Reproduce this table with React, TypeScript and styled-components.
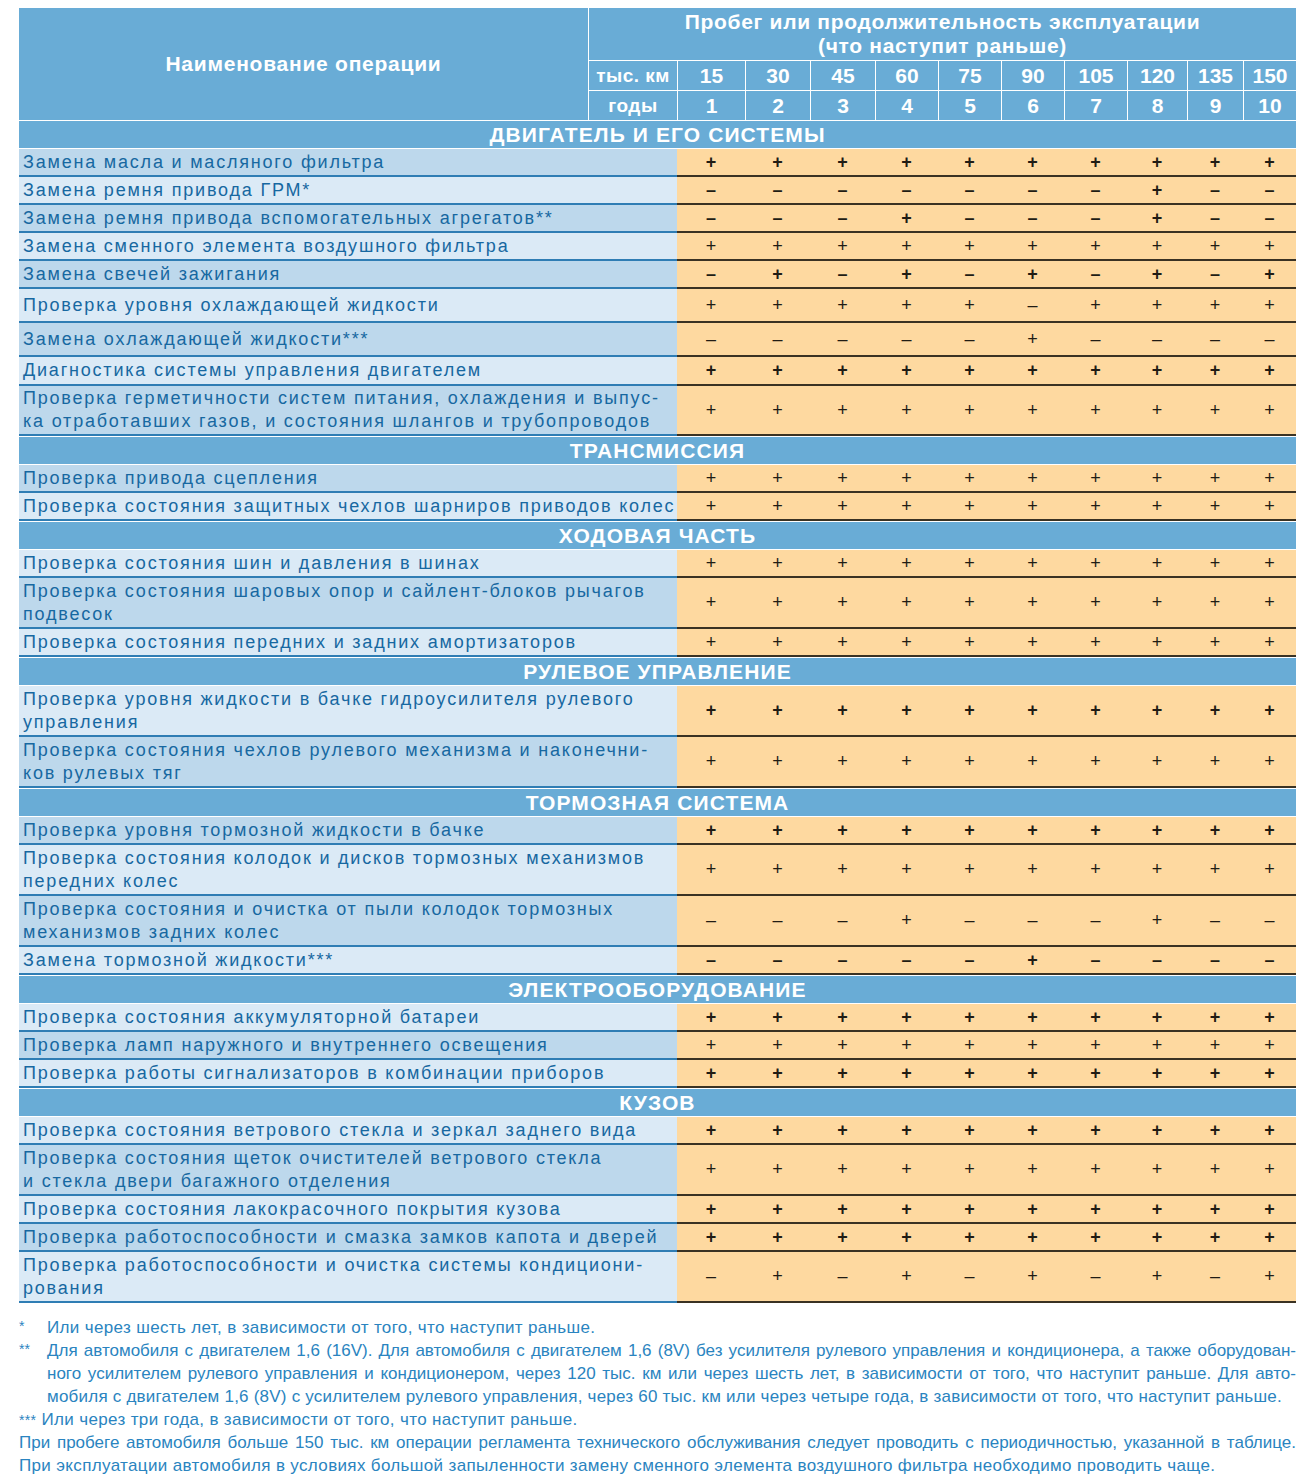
import React from 'react';
import styled, { createGlobalStyle } from 'styled-components';

const GlobalStyle = createGlobalStyle`
  html, body {
    margin: 0;
    padding: 0;
    background: #ffffff;
  }
  body {
    font-family: "Liberation Sans", Arial, sans-serif;
  }
`;

const BLUE = '#69acd6';
const NAME_WIDTH = 658;
const LABEL_WIDTH = 88;
const VALUE_COLS = [68, 65, 65, 63, 63, 63, 63, 60, 56, 53];

const Page = styled.div`
  width: 1277px;
  padding: 8px 10px 0 19px;
`;

const HeadGrid = styled.div`
  display: grid;
  grid-template-columns: ${NAME_WIDTH - LABEL_WIDTH - 1}px ${LABEL_WIDTH}px ${VALUE_COLS.map(w => `${w - 1}px`).join(' ')};
  grid-template-rows: 52px 29px 29px;
  gap: 1px;
  background: #ffffff;
`;

const HeadCell = styled.div<{ $size?: number }>`
  background: ${BLUE};
  color: #ffffff;
  font-weight: 700;
  font-size: ${p => p.$size ?? 20}px;
  display: flex;
  align-items: center;
  justify-content: center;
  white-space: nowrap;
`;

const UnitHead = styled(HeadCell)`
  letter-spacing: 0.5px;
`;

const NameHead = styled(HeadCell)`
  grid-row: 1 / 4;
  letter-spacing: 0.75px;
`;

const TitleHead = styled(HeadCell)`
  grid-column: 2 / -1;
  flex-direction: column;
  line-height: 24px;
  letter-spacing: 0.7px;
`;

const SectionBar = styled.div`
  height: 27px;
  margin: 1px 0;
  background: ${BLUE};
  color: #ffffff;
  font-weight: 700;
  font-size: 21px;
  letter-spacing: 1.1px;
  display: flex;
  align-items: center;
  justify-content: center;
`;

const Row = styled.div<{ $h: number }>`
  display: grid;
  grid-template-columns: ${NAME_WIDTH}px ${VALUE_COLS.map(w => `${w}px`).join(' ')};
  height: ${p => p.$h}px;
`;

const NameCell = styled.div<{ $shade: 'mid' | 'light' }>`
  background: ${p => (p.$shade === 'mid' ? '#bdd8ec' : '#dbeaf6')};
  border-bottom: 2px solid #2f7db4;
  padding: 0 4px;
  display: flex;
  flex-direction: column;
  justify-content: center;
  color: #1768a1;
  font-size: 18px;
  line-height: 23px;
  letter-spacing: 1.8px;
  white-space: nowrap;
  overflow: hidden;
`;

const MarkCell = styled.div<{ $strong?: boolean }>`
  background: #fed9a0;
  border-bottom: 2px solid #3a3223;
  display: flex;
  align-items: center;
  justify-content: center;
  color: #211c14;
  font-size: 18px;
  font-weight: ${p => (p.$strong ? 700 : 400)};
`;

const Notes = styled.div`
  margin-top: 13px;
  color: #2a84c0;
  font-size: 17px;
  line-height: 23px;
`;

const Note = styled.div`
  display: grid;
  grid-template-columns: 28px 1fr;
`;

const Marker = styled.span`
  font-size: 14px;
  line-height: 20px;
`;

const NoteLine = styled.div<{ $fill?: boolean; $tight?: boolean }>`
  letter-spacing: ${p => (p.$fill ? 0 : p.$tight ? 0.22 : 0.35)}px;
  white-space: ${p => (p.$tight ? 'nowrap' : 'normal')};
  text-align: ${p => (p.$fill ? 'justify' : 'left')};
  text-align-last: ${p => (p.$fill ? 'justify' : 'left')};
`;

type Shade = 'mid' | 'light';

interface Op {
  lines: string[];
  marks: string;
  h?: number;
  strong?: boolean;
}

interface Section {
  title: string;
  start: Shade;
  ops: Op[];
}

const ALL = '++++++++++';

const sections: Section[] = [
  {
    title: 'ДВИГАТЕЛЬ И ЕГО СИСТЕМЫ',
    start: 'mid',
    ops: [
      { lines: ['Замена масла и масляного фильтра'], marks: ALL, strong: true },
      { lines: ['Замена ремня привода ГРМ*'], marks: '-------+--', strong: true },
      { lines: ['Замена ремня привода вспомогательных агрегатов**'], marks: '---+---+--', strong: true },
      { lines: ['Замена сменного элемента воздушного фильтра'], marks: ALL },
      { lines: ['Замена свечей зажигания'], marks: '-+-+-+-+-+', strong: true },
      { lines: ['Проверка уровня охлаждающей жидкости'], marks: '+++++-++++', h: 34 },
      { lines: ['Замена охлаждающей жидкости***'], marks: '-----+----', h: 34 },
      { lines: ['Диагностика системы управления двигателем'], marks: ALL, h: 29, strong: true },
      {
        lines: [
          'Проверка герметичности систем питания, охлаждения и выпус-',
          'ка отработавших газов, и состояния шлангов и трубопроводов',
        ],
        marks: ALL,
        h: 50,
      },
    ],
  },
  {
    title: 'ТРАНСМИССИЯ',
    start: 'mid',
    ops: [
      { lines: ['Проверка привода сцепления'], marks: ALL },
      { lines: ['Проверка состояния защитных чехлов шарниров приводов колес'], marks: ALL },
    ],
  },
  {
    title: 'ХОДОВАЯ ЧАСТЬ',
    start: 'light',
    ops: [
      { lines: ['Проверка состояния шин и давления в шинах'], marks: ALL },
      { lines: ['Проверка состояния шаровых опор и сайлент-блоков рычагов', 'подвесок'], marks: ALL, h: 51 },
      { lines: ['Проверка состояния передних и задних амортизаторов'], marks: ALL },
    ],
  },
  {
    title: 'РУЛЕВОЕ УПРАВЛЕНИЕ',
    start: 'light',
    ops: [
      { lines: ['Проверка уровня жидкости в бачке гидроусилителя рулевого', 'управления'], marks: ALL, h: 51, strong: true },
      { lines: ['Проверка состояния чехлов рулевого механизма и наконечни-', 'ков рулевых тяг'], marks: ALL, h: 51 },
    ],
  },
  {
    title: 'ТОРМОЗНАЯ СИСТЕМА',
    start: 'mid',
    ops: [
      { lines: ['Проверка уровня тормозной жидкости в бачке'], marks: ALL, strong: true },
      { lines: ['Проверка состояния колодок и дисков тормозных механизмов', 'передних колес'], marks: ALL, h: 51 },
      { lines: ['Проверка состояния и очистка от пыли колодок тормозных', 'механизмов задних колес'], marks: '---+---+--', h: 51 },
      { lines: ['Замена тормозной жидкости***'], marks: '-----+----', strong: true },
    ],
  },
  {
    title: 'ЭЛЕКТРООБОРУДОВАНИЕ',
    start: 'light',
    ops: [
      { lines: ['Проверка состояния аккумуляторной батареи'], marks: ALL, strong: true },
      { lines: ['Проверка ламп наружного и внутреннего освещения'], marks: ALL },
      { lines: ['Проверка работы сигнализаторов в комбинации приборов'], marks: ALL, strong: true },
    ],
  },
  {
    title: 'КУЗОВ',
    start: 'light',
    ops: [
      { lines: ['Проверка состояния ветрового стекла и зеркал заднего вида'], marks: ALL, strong: true },
      { lines: ['Проверка состояния щеток очистителей ветрового стекла', 'и стекла двери багажного отделения'], marks: ALL, h: 51 },
      { lines: ['Проверка состояния лакокрасочного покрытия кузова'], marks: ALL, strong: true },
      { lines: ['Проверка работоспособности и смазка замков капота и дверей'], marks: ALL, strong: true },
      { lines: ['Проверка работоспособности и очистка системы кондициони-', 'рования'], marks: '-+-+-+-+-+', h: 51 },
    ],
  },
];

const KM = [15, 30, 45, 60, 75, 90, 105, 120, 135, 150];

const other = (s: Shade): Shade => (s === 'mid' ? 'light' : 'mid');

const App: React.FC = () => (
  <Page>
    <GlobalStyle />
    <HeadGrid>
      <NameHead $size={21}>Наименование операции</NameHead>
      <TitleHead $size={21}>
        <span>Пробег или продолжительность эксплуатации</span>
        <span>(что наступит раньше)</span>
      </TitleHead>
      <UnitHead $size={19}>тыс. км</UnitHead>
      {KM.map(k => (
        <HeadCell key={`km-${k}`} $size={21}>{k}</HeadCell>
      ))}
      <UnitHead $size={19}>годы</UnitHead>
      {KM.map((k, i) => (
        <HeadCell key={`y-${k}`} $size={21}>{i + 1}</HeadCell>
      ))}
    </HeadGrid>

    {sections.map(section => (
      <React.Fragment key={section.title}>
        <SectionBar>{section.title}</SectionBar>
        {section.ops.map((op, i) => (
          <Row key={op.lines[0]} $h={op.h ?? 28}>
            <NameCell $shade={i % 2 === 0 ? section.start : other(section.start)}>
              {op.lines.map(line => (
                <span key={line}>{line}</span>
              ))}
            </NameCell>
            {op.marks.split('').map((m, j) => (
              <MarkCell key={j} $strong={op.strong}>{m === '+' ? '+' : '–'}</MarkCell>
            ))}
          </Row>
        ))}
      </React.Fragment>
    ))}

    <Notes>
      <Note>
        <Marker>*</Marker>
        <NoteLine>Или через шесть лет, в зависимости от того, что наступит раньше.</NoteLine>
      </Note>
      <Note>
        <Marker>**</Marker>
        <div>
          <NoteLine $fill>
            Для автомобиля с двигателем 1,6 (16V). Для автомобиля с двигателем 1,6 (8V) без усилителя рулевого управления и кондиционера, а также оборудован-
          </NoteLine>
          <NoteLine $fill>
            ного усилителем рулевого управления и кондиционером, через 120 тыс. км или через шесть лет, в зависимости от того, что наступит раньше. Для авто-
          </NoteLine>
          <NoteLine $tight>
            мобиля с двигателем 1,6 (8V) с усилителем рулевого управления, через 60 тыс. км или через четыре года, в зависимости от того, что наступит раньше.
          </NoteLine>
        </div>
      </Note>
      <NoteLine>
        <Marker>***</Marker> Или через три года, в зависимости от того, что наступит раньше.
      </NoteLine>
      <NoteLine $fill>
        При пробеге автомобиля больше 150 тыс. км операции регламента технического обслуживания следует проводить с периодичностью, указанной в таблице.
      </NoteLine>
      <NoteLine>
        При эксплуатации автомобиля в условиях большой запыленности замену сменного элемента воздушного фильтра необходимо проводить чаще.
      </NoteLine>
    </Notes>
  </Page>
);

export default App;
